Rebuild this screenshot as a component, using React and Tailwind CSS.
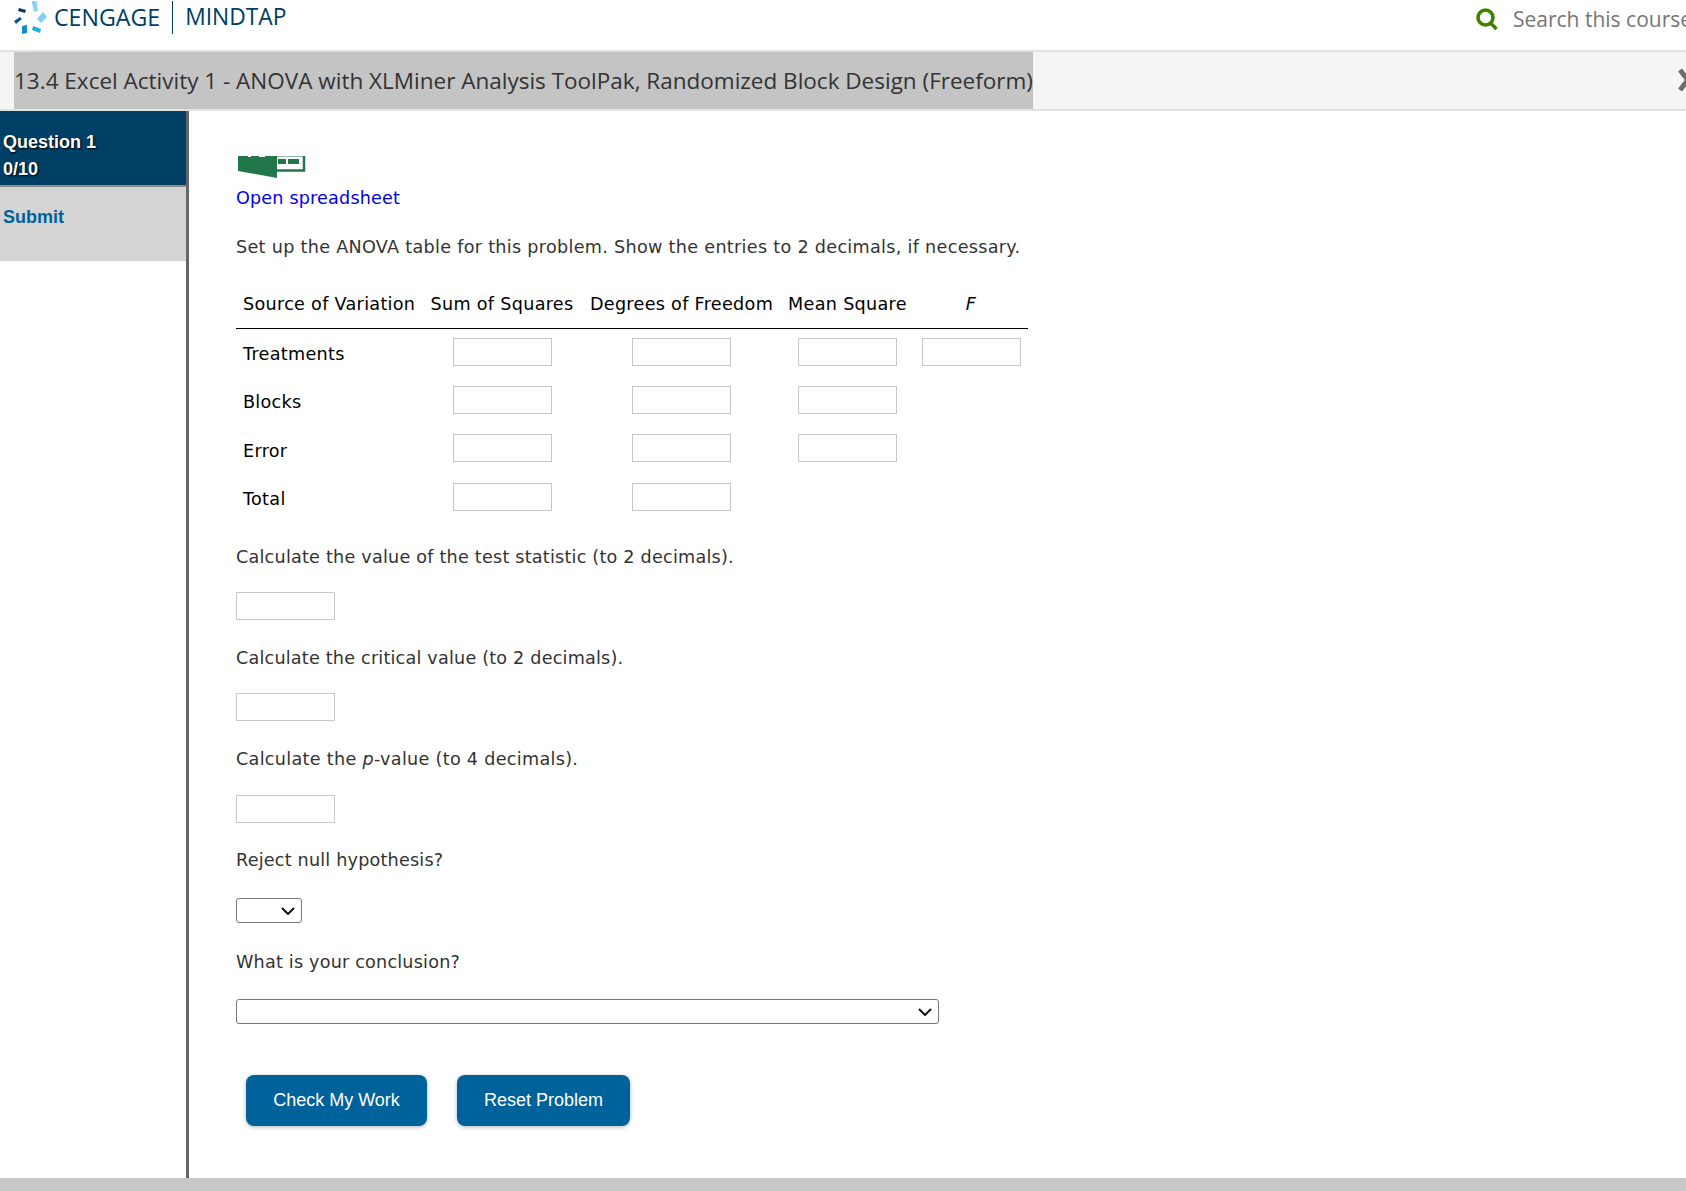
import React from 'react';

const FieldBox = () => (
    <input type="text" className="block w-[99px] h-[28px] border border-[#c8c8c8] bg-white" />
);

const CengageLogo = () => (
    <svg width="34" height="33" viewBox="14 0 34 33" className="shrink-0">
        <path d="M31.5 0h5l1.5 10-4 1z" fill="#8ad4f6" />
        <path d="M19 7l7 2-1 3-7-2z" fill="#003e63" />
        <path d="M43 11l4 5-6 6-4-4z" fill="#7fd0f3" />
        <path d="M14 20l6-4 2 2-6 5z" fill="#045e94" />
        <path d="M22 25l5-1v8l-5 1z" fill="#0f8fcb" />
        <path d="M33 25l8 3-1 4-8-3z" fill="#1cb0e6" />
    </svg>
);

const SelectBox = ({ width }) => (
    <div className={`relative ${width}`}>
        <select className="block w-full h-[25px] appearance-none border border-[#767676] rounded-[3px] bg-white text-black" />
        <svg width="14" height="8" viewBox="0 0 14 8" className="absolute right-[7px] top-[8.5px] pointer-events-none">
            <path d="M1 1l6 6 6-6" fill="none" stroke="#111" strokeWidth="2" />
        </svg>
    </div>
);

const Row = ({ label, boxes }) => (
    <tr className="h-[48.5px]">
        <td className="pl-[7px] pt-[3px] align-middle text-black">{label}</td>
        {[0, 1, 2, 3].map((i) => (
            <td key={i} className="align-middle">
                {i < boxes && <div className="flex justify-center -translate-y-[1px]"><FieldBox /></div>}
            </td>
        ))}
    </tr>
);

const App = () => {
    return (
        <div className="w-[1686px] h-[1191px] overflow-hidden bg-white flex flex-col font-['DejaVu_Sans',sans-serif] text-[17.6px] text-[#333]">
            <header className="h-[50px] shrink-0 flex items-start justify-between overflow-hidden font-['Open_Sans',sans-serif]">
                <div className="flex items-center h-[34px] pl-[14px] text-[#003e63]">
                    <CengageLogo />
                    <span className="ml-[6px] text-[23.2px] leading-[36px]">CENGAGE</span>
                    <span className="mx-[12px] w-[1px] h-[33px] bg-[#003e63]" />
                    <span className="text-[22.8px] leading-[36px]">MINDTAP</span>
                </div>
                <div className="flex items-center w-[211px] shrink-0 overflow-hidden whitespace-nowrap mt-[4px] text-[#767676] text-[21px]">
                    <svg width="24" height="24" viewBox="0 0 24 24" className="shrink-0 mr-[14px] -mt-[1px]">
                        <circle cx="10.5" cy="10.5" r="7.5" fill="none" stroke="#3f8000" strokeWidth="3.6" />
                        <path d="M15.5 16l6 6" stroke="#3f8000" strokeWidth="3.6" />
                    </svg>
                    Search this course
                </div>
            </header>

            <div className="h-[61px] shrink-0 bg-[#f5f5f5] border-y-2 border-[#e2e2e2] pl-[14px] flex overflow-hidden relative font-['Open_Sans',sans-serif]">
                <h1 className="bg-[#c4c4c4] w-[1019px] text-[22.5px] leading-[57px] whitespace-nowrap font-normal text-[#333]">
                    13.4 Excel Activity 1 - ANOVA with XLMiner Analysis ToolPak, Randomized Block Design (Freeform)
                </h1>
                <svg width="12" height="24" viewBox="0 0 12 24" className="absolute left-[1678px] top-[16px]">
                    <path d="M2 2l16 20M18 2L2 22" stroke="#6d6d6d" strokeWidth="5" />
                </svg>
            </div>

            <div className="flex-1 flex min-h-0">
                <aside className="w-[189px] shrink-0 border-r-[3px] border-[#666] font-['Liberation_Sans',sans-serif] font-bold text-[18px]">
                    <div className="h-[74px] bg-[#003f66] text-white pl-[3px] pt-[18px] leading-[27px] [text-shadow:1px_1px_2px_#000]">
                        <div>Question 1</div>
                        <div>0/10</div>
                    </div>
                    <div className="h-[76px] bg-[#d4d4d4] border-t-2 border-[#8a8a8a] pl-[3px] pt-[17px] text-[#006199]">
                        Submit
                    </div>
                </aside>

                <main className="flex-1 pl-[47px] pt-[44px] tracking-[0.3px]">
                    <svg width="72" height="24" viewBox="0 0 72 24" className="block">
                        <path d="M2 1h39v22L2 16z" fill="#22774a" />
                        <path d="M12 1h3v1h-3zM23 1h6v1h-6z" fill="#ffffff" />
                        <path d="M41 15.5h27V1" fill="none" stroke="#22774a" strokeWidth="2.5" />
                        <path d="M41 1h27v1H41z" fill="#22774a" opacity="0.5" />
                        <path d="M42 4h8v5h-8zM52 4h11v5H52z" fill="#22774a" />
                    </svg>
                    <a className="block mt-[6px] leading-[26px] text-[#0000ee] tracking-[0.17px]">Open spreadsheet</a>
                    <p className="mt-[23px] leading-[26px]">Set up the ANOVA table for this problem. Show the entries to 2 decimals, if necessary.</p>

                    <table className="mt-[21px] w-[792px] table-fixed border-collapse">
                        <colgroup>
                            <col className="w-[186px]" />
                            <col className="w-[160px]" />
                            <col className="w-[199px]" />
                            <col className="w-[133px]" />
                            <col className="w-[114px]" />
                        </colgroup>
                        <thead>
                            <tr className="h-[47px] border-b border-black text-black whitespace-nowrap">
                                <th className="pl-[7px] text-left font-normal">Source of Variation</th>
                                <th className="font-normal">Sum of Squares</th>
                                <th className="font-normal">Degrees of Freedom</th>
                                <th className="font-normal">Mean Square</th>
                                <th className="font-normal italic">F</th>
                            </tr>
                        </thead>
                        <tbody>
                            <Row label="Treatments" boxes={4} />
                            <Row label="Blocks" boxes={3} />
                            <Row label="Error" boxes={3} />
                            <Row label="Total" boxes={2} />
                        </tbody>
                    </table>

                    <p className="mt-[22px] leading-[26px] tracking-[0.22px]">Calculate the value of the test statistic (to 2 decimals).</p>
                    <div className="mt-[22px]"><FieldBox /></div>
                    <p className="mt-[25px] leading-[26px] tracking-[0.2px]">Calculate the critical value (to 2 decimals).</p>
                    <div className="mt-[22px]"><FieldBox /></div>
                    <p className="mt-[25px] leading-[26px]">Calculate the <em>p</em>-value (to 4 decimals).</p>
                    <div className="mt-[23px]"><FieldBox /></div>
                    <p className="mt-[24px] leading-[26px] tracking-[0.2px]">Reject null hypothesis?</p>
                    <div className="mt-[25px]"><SelectBox width="w-[66px]" /></div>
                    <p className="mt-[26px] leading-[26px] tracking-[0.2px]">What is your conclusion?</p>
                    <div className="mt-[24px]"><SelectBox width="w-[703px]" /></div>

                    <div className="flex gap-[30px] mt-[51px] ml-[10px] font-['Liberation_Sans',sans-serif] tracking-normal">
                        <button className="w-[181px] h-[51px] rounded-[8px] bg-[#00629b] text-white text-[18px] shadow-[0_1px_4px_rgba(0,0,0,0.3)]">Check My Work</button>
                        <button className="w-[173px] h-[51px] rounded-[8px] bg-[#00629b] text-white text-[18px] shadow-[0_1px_4px_rgba(0,0,0,0.3)]">Reset Problem</button>
                    </div>
                </main>
            </div>

            <div className="h-[13px] shrink-0 bg-[#c8c8c8]" />
        </div>
    );
};

export default App;
